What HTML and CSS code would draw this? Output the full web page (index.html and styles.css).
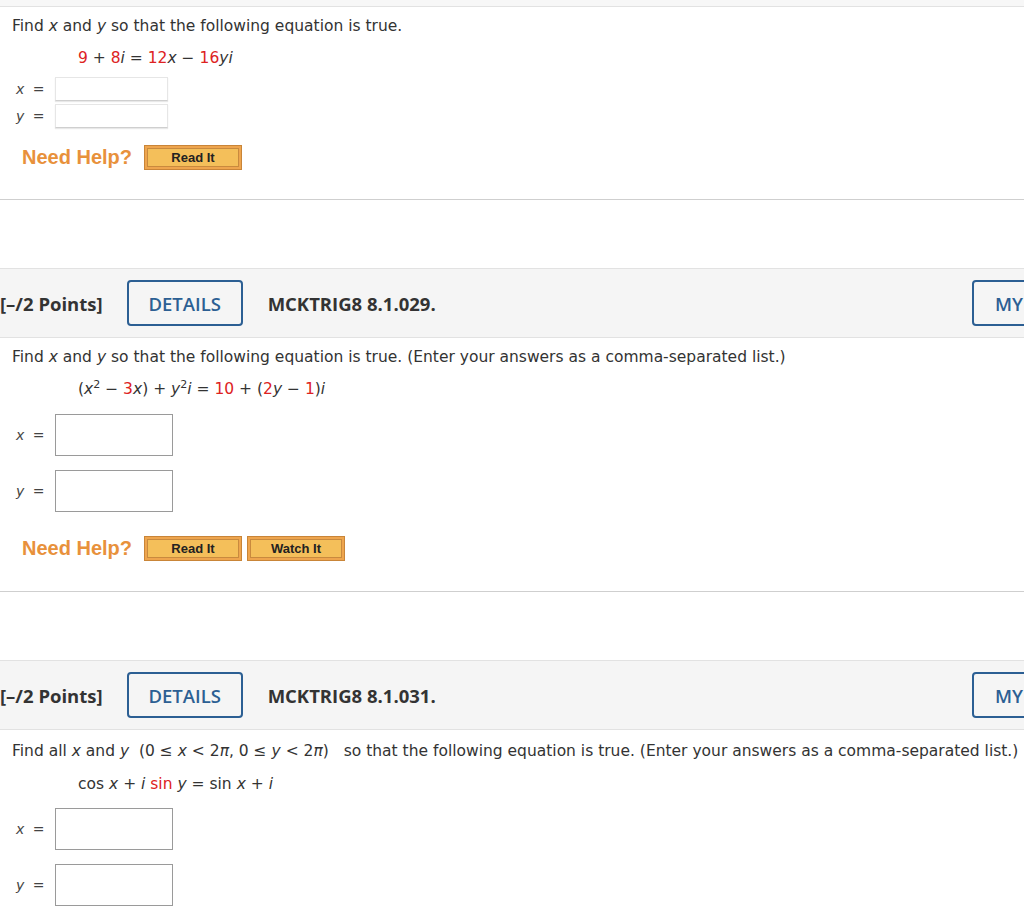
FILE: index.html
```html
<!DOCTYPE html>
<html>
<head>
<meta charset="utf-8">
<link rel="stylesheet" href="styles.css">
</head>
<body>
<div class="topbar"></div>

<section class="qbody q1">
  <p class="prompt">Find <i>x</i> and <i>y</i> so that the following equation is true.</p>
  <p class="eq"><span class="r">9</span> + <span class="r">8</span><i>i</i> = <span class="r">12</span><i>x</i> − <span class="r">16</span><i>yi</i></p>
  <div class="answers small">
    <div class="arow"><span class="lbl"><i>x</i> =</span><span class="box"></span></div>
    <div class="arow"><span class="lbl"><i>y</i> =</span><span class="box"></span></div>
  </div>
  <div class="help"><span class="needhelp">Need Help?</span><span class="hbtn"><span>Read It</span></span></div>
</section>
<div class="sep"></div>

<header class="qhead">
  <span class="pts">[–/2 Points]</span>
  <span class="obtn">DETAILS</span>
  <span class="code">MCKTRIG8 8.1.029.</span>
  <span class="spring"></span>
  <span class="obtn my">MY</span>
</header>
<section class="qbody q2">
  <p class="prompt">Find <i>x</i> and <i>y</i> so that the following equation is true. (Enter your answers as a comma-separated list.)</p>
  <p class="eq">(<i>x</i><sup>2</sup> − <span class="r">3</span><i>x</i>) + <i>y</i><sup>2</sup><i>i</i> = <span class="r">10</span> + (<span class="r">2</span><i>y</i> − <span class="r">1</span>)<i>i</i></p>
  <div class="answers big">
    <div class="arow"><span class="lbl"><i>x</i> =</span><span class="box"></span></div>
    <div class="arow"><span class="lbl"><i>y</i> =</span><span class="box"></span></div>
  </div>
  <div class="help"><span class="needhelp">Need Help?</span><span class="hbtn"><span>Read It</span></span><span class="hbtn"><span>Watch It</span></span></div>
</section>
<div class="sep"></div>

<header class="qhead">
  <span class="pts">[–/2 Points]</span>
  <span class="obtn">DETAILS</span>
  <span class="code">MCKTRIG8 8.1.031.</span>
  <span class="spring"></span>
  <span class="obtn my">MY</span>
</header>
<section class="qbody q3">
  <p class="prompt">Find all <i>x</i> and <i>y</i>&nbsp; <span class="range">(0 ≤ <i>x</i> &lt; 2<i>π</i>, 0 ≤ <i>y</i> &lt; 2<i>π</i>)</span>&nbsp; so that the following equation is true. (Enter your answers as a comma-separated list.)</p>
  <p class="eq">cos <i>x</i> + <i>i</i> <span class="r">sin</span> <i>y</i> = sin <i>x</i> + <i>i</i></p>
  <div class="answers big">
    <div class="arow"><span class="lbl"><i>x</i> =</span><span class="box"></span></div>
    <div class="arow"><span class="lbl"><i>y</i> =</span><span class="box"></span></div>
  </div>
</section>
</body>
</html>
```

FILE: styles.css
```css
html, body {
  margin: 0;
  padding: 0;
  background: #fff;
  overflow: hidden;
}
body {
  width: 1024px;
  height: 921px;
  font-family: "DejaVu Sans", Verdana, sans-serif;
  color: #333;
}
.topbar {
  height: 6px;
  background: #f7f7f7;
  border-bottom: 1px solid #e2e2e2;
}
.qbody {
  padding: 0 0 0 12px;
}
.prompt {
  margin: 0;
  font-size: 15.5px;
  line-height: 20px;
  white-space: nowrap;
}
.q1 .prompt { padding-top: 9px; }
.q2 .prompt { padding-top: 9px; }
.q3 .prompt { padding-top: 11px; }
.range { margin-right: 5px; }
.eq {
  margin: 0;
  padding-left: 66px;
  font-size: 15.5px;
  line-height: 20px;
  color: #333;
}
.q1 .eq { margin-top: 12px; }
.q2 .eq { margin-top: 12px; }
.q3 .eq { margin-top: 13px; }
.eq sup {
  font-size: 11px;
  line-height: 0;
  vertical-align: 6px;
}
.r { color: #d22; }
i { font-style: italic; }
.answers {
  display: flex;
  flex-direction: column;
}
.arow {
  display: flex;
  align-items: center;
}
.lbl {
  width: 43px;
  padding-left: 4px;
  font-size: 14px;
  word-spacing: 4px;
  color: #444;
  box-sizing: border-box;
}
.small { margin-top: 9px; gap: 3px; }
.small .box {
  width: 113px;
  height: 24px;
  box-sizing: border-box;
  border: 1px solid #e6e6e6;
  border-bottom-color: #cfcfcf;
  box-shadow: 0 1px 1px #e8e8e8;
}
.small + .help { margin-top: 17px; }
.big { margin-top: 15px; gap: 14px; }
.q3 .big { margin-top: 14px; }
.big .box {
  width: 118px;
  height: 42px;
  box-sizing: border-box;
  border: 1px solid #9a9a9a;
}
.help {
  display: flex;
  align-items: center;
  gap: 5px;
  padding-left: 10px;
}
.q2 .help { margin-top: 24px; }
.needhelp {
  font-family: "Liberation Sans", Arial, sans-serif;
  font-weight: bold;
  font-size: 20px;
  color: #e8913b;
  margin-right: 7px;
}
.hbtn {
  display: inline-flex;
  width: 98px;
  height: 25px;
  box-sizing: border-box;
  border: 1px solid #c98538;
  background: #eea54e;
  padding: 2px;
}
.hbtn span {
  flex: 1;
  display: flex;
  align-items: center;
  justify-content: center;
  border: 1px solid #c98a3e;
  background: #f4bf5a;
  font-family: "Liberation Sans", Arial, sans-serif;
  font-weight: bold;
  font-size: 13px;
  color: #222;
}
.sep {
  height: 68px;
  border-top: 1px solid #cfcfcf;
}
.q1 + .sep { margin-top: 29px; }
.q2 + .sep { margin-top: 30px; }
.qhead {
  display: flex;
  align-items: center;
  height: 70px;
  box-sizing: border-box;
  background: #f5f5f5;
  border-top: 1px solid #e2e2e2;
  border-bottom: 1px solid #e2e2e2;
  font-family: "Open Sans", sans-serif;
  font-weight: bold;
  font-size: 18.5px;
  color: #333;
  overflow: hidden;
}
.pts {
  margin-left: 0;
  white-space: nowrap;
}
.obtn {
  display: inline-flex;
  align-items: center;
  justify-content: center;
  width: 116px;
  height: 46px;
  box-sizing: border-box;
  border: 2px solid #2c5f93;
  border-radius: 4px;
  color: #2c5f93;
  font-weight: 600;
  margin-left: 24px;
  flex-shrink: 0;
}
.code {
  margin-left: 25px;
  white-space: nowrap;
}
.spring { flex: 1; }
.my {
  margin-left: 0;
  margin-right: -64px;
  justify-content: flex-start;
  padding-left: 21px;
}
```
